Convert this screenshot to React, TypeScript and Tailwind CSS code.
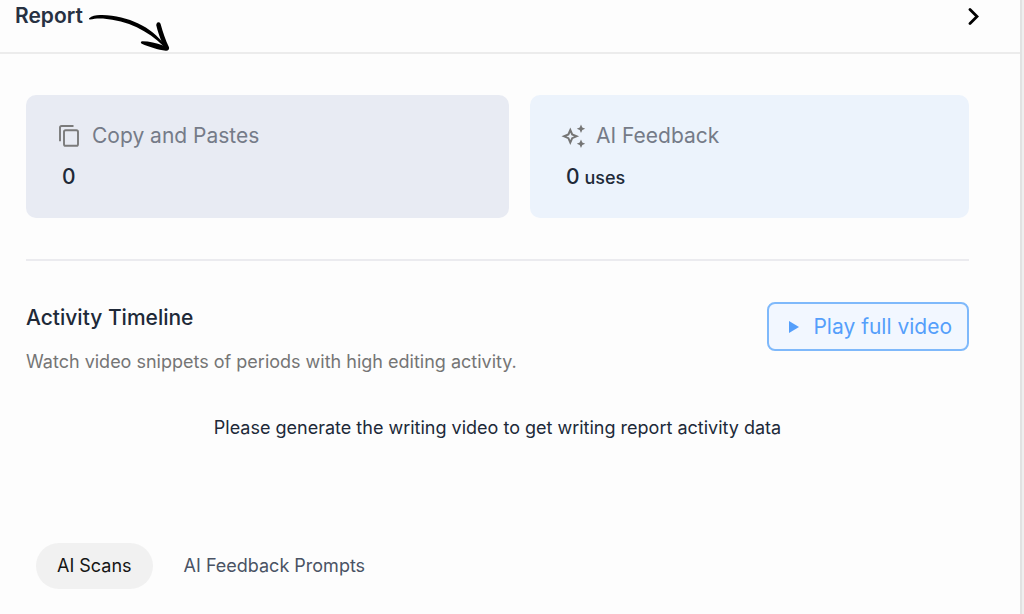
import React from 'react';

function CopyIcon() {
  return (
    <svg viewBox="0 0 22 24" className="h-6 w-[22px] shrink-0" fill="none" stroke="#7b7b7b" strokeWidth="1.9" aria-hidden="true">
      <rect x="6" y="6.2" width="14" height="15.6" rx="1.6" />
      <path d="M2 17.2V3.6Q2 2 3.6 2H15.5" />
    </svg>
  );
}

function SparkleIcon() {
  return (
    <svg viewBox="0 0 24 24" className="h-6 w-[22px] shrink-0 overflow-visible" preserveAspectRatio="xMinYMid slice" aria-hidden="true">
      <path d="M8.3 6L10.2 10.4L14.6 12.3L10.2 14.2L8.3 18.6L6.4 14.2L2 12.3L6.4 10.4Z" fill="none" stroke="#757575" strokeWidth="2" strokeLinejoin="miter" />
      <path d="M19 0.6L20.3 3.5L23.2 4.8L20.3 6.1L19 9L17.7 6.1L14.8 4.8L17.7 3.5Z M19 15.6L20.3 18.5L23.2 19.8L20.3 21.1L19 24L17.7 21.1L14.8 19.8L17.7 18.5Z" fill="#757575" />
    </svg>
  );
}

function ArrowDoodle() {
  return (
    <svg viewBox="0 0 82 38" className="h-[38px] w-[82px]" aria-hidden="true">
      <path d="M1.2 5.2C4 2.2 9 1.8 14 2C41 3.1 63 13.6 76.5 31.5L75.3 33C60 18 40 7.6 15 5.6C10 5.1 6 5.8 2 6.4C1 6.6 0.6 5.8 1.2 5.2Z" />
      <path d="M69 9.8C70.4 8.6 72 9.2 72.6 11C75 19.5 77.4 27 81 34.2C81.6 36 80 38 77.8 37.7C70 37 61 33.8 53.8 30.8C52.2 30 52.8 28.2 54.4 28.3C61.5 28.4 68 29.8 75.2 32.6C72.4 26 69.6 18.5 68.2 12Z" />
    </svg>
  );
}

type StatCardProps = {
  icon: React.ReactNode;
  title: string;
  value: string;
  unit?: string;
  tone: string;
};

function StatCard({ icon, title, value, unit, tone }: StatCardProps) {
  return (
    <section className={`rounded-[10px] px-8 py-[25px] ${tone}`}>
      <h2 className="flex h-8 items-center gap-3 text-[21px] text-[#757b88]">
        {icon}
        {title}
      </h2>
      <p className="mt-[9px] flex h-8 items-baseline gap-[5px] pl-1 text-[21px] leading-8 font-medium text-[#202938]">
        {value}
        {unit && <span className="text-lg leading-8">{unit}</span>}
      </p>
    </section>
  );
}

export default function App() {
  return (
    <div className="flex min-h-screen bg-[#efefef] pr-[2px] font-[Inter,sans-serif]">
      <main className="min-w-0 flex-1 border-r-2 border-[#e2e2e2] bg-[#fdfdfd]">
        <header className="relative flex h-[54px] justify-between border-b-2 border-[#ececec] pr-9 pl-[15px]">
          <h1 className="h-8 text-[21px] leading-8 font-semibold text-[#273142]">Report</h1>
          <div className="absolute top-[13px] left-[88px]">
            <ArrowDoodle />
          </div>
          <button type="button" aria-label="Next" className="flex h-8 w-5 items-center justify-center">
            <svg viewBox="0 0 12 18" className="h-[18px] w-3" fill="none" stroke="#000" strokeWidth="2.8" aria-hidden="true">
              <path d="M2 2.5L9 9.5L2 16.5" strokeLinecap="round" />
            </svg>
          </button>
        </header>

        <div className="pr-[51px] pl-[26px]">
          <div className="grid grid-cols-[11fr_10fr] gap-[21px] py-[41px]">
            <StatCard icon={<CopyIcon />} title="Copy and Pastes" value="0" tone="bg-[#e8ebf3]" />
            <StatCard icon={<SparkleIcon />} title="AI Feedback" value="0" unit="uses" tone="bg-[#ecf3fc]" />
          </div>

          <section className="border-t-2 border-[#ebebef] pt-[41px]">
            <div className="flex items-start justify-between">
              <div>
                <h2 className="text-[21px] leading-8 font-medium text-[#202938]">Activity Timeline</h2>
                <p className="mt-3 text-lg leading-8 text-[#757575]">
                  Watch video snippets of periods with high editing activity.
                </p>
              </div>
              <button
                type="button"
                className="flex h-[49px] items-center gap-[14px] rounded-lg border-2 border-[#7fb9fb] bg-[#f2f7ff] pr-[15px] pl-5 text-[21px] text-[#559ffb]"
              >
                <svg viewBox="0 0 10 12" className="h-3 w-[10px]" fill="currentColor" aria-hidden="true">
                  <path d="M0 0L10 6L0 12Z" />
                </svg>
                Play full video
              </button>
            </div>
            <p className="mt-[34px] text-center text-lg leading-8 text-[#202938]">
              Please generate the writing video to get writing report activity data
            </p>
          </section>

          <div role="tablist" className="mt-[99px] flex gap-[10px] pl-[10px] text-lg">
            <button type="button" role="tab" aria-selected="true" className="h-[46px] rounded-full bg-[#f1f1f1] px-[21px] text-[#151515]">
              AI Scans
            </button>
            <button type="button" role="tab" aria-selected="false" className="h-[46px] rounded-full px-[21px] text-[#4a5364]">
              AI Feedback Prompts
            </button>
          </div>
        </div>
      </main>
    </div>
  );
}
